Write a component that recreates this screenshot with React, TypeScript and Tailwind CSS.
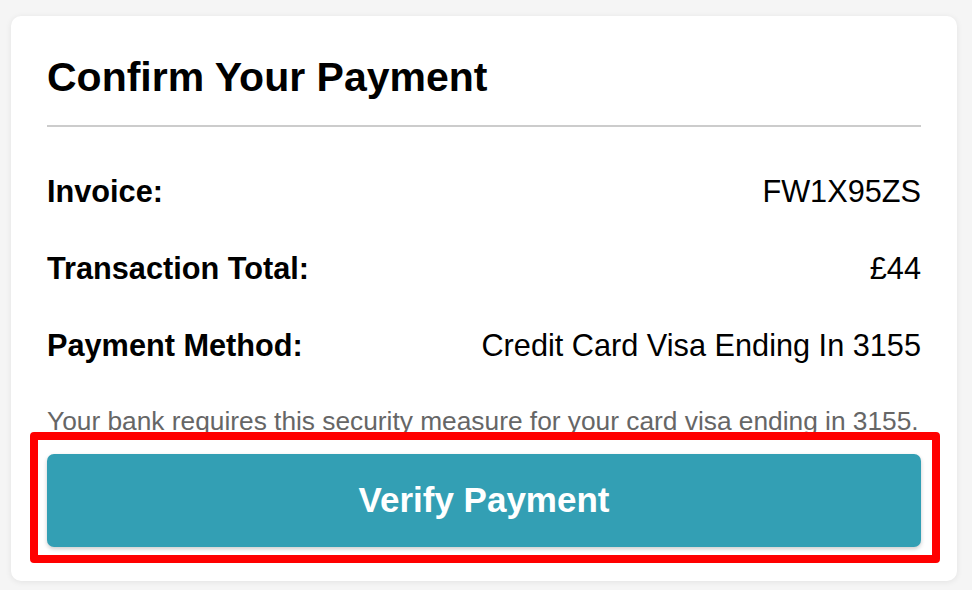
export default function App() {
  return (
    <div className="min-h-screen bg-[#f5f5f5] pt-[16px] pl-[11px] pr-[15px] font-['Liberation_Sans',Arial,sans-serif]">
      <div className="bg-white rounded-[10px] shadow-[0_1px_6px_rgba(0,0,0,0.08)] px-9 pt-[38px] pb-[18px]">
        <h1 className="text-[41px] leading-[46px] font-bold text-black">Confirm Your Payment</h1>
        <hr className="mt-[25px] border-0 h-[2px] bg-[#cccccc]" />

        <div className="mt-[48px] flex flex-col gap-[43px] text-[30.7px] leading-[34px] text-black">
          <div className="flex justify-between">
            <span className="font-bold">Invoice:</span>
            <span>FW1X95ZS</span>
          </div>
          <div className="flex justify-between">
            <span className="font-bold">Transaction Total:</span>
            <span>£44</span>
          </div>
          <div className="flex justify-between">
            <span className="font-bold">Payment Method:</span>
            <span>Credit Card Visa Ending In 3155</span>
          </div>
        </div>

        <p className="mt-[43px] text-[26.3px] leading-[30px] text-[#666666] whitespace-nowrap">
          Your bank requires this security measure for your card visa ending in 3155.
        </p>

        <div className="relative -mt-[4px] -ml-[17px] -mr-[19px] bg-white border-[8px] border-[#ff0000] rounded-[4px] pl-[9px] pr-[11px] pt-[14px] pb-[8px]">
          <button className="w-full h-[93px] rounded-[7px] bg-[#339fb4] text-white text-[35px] font-bold shadow-[0_2px_4px_rgba(0,0,0,0.2)]">
            Verify Payment
          </button>
        </div>
      </div>
    </div>
  );
}
